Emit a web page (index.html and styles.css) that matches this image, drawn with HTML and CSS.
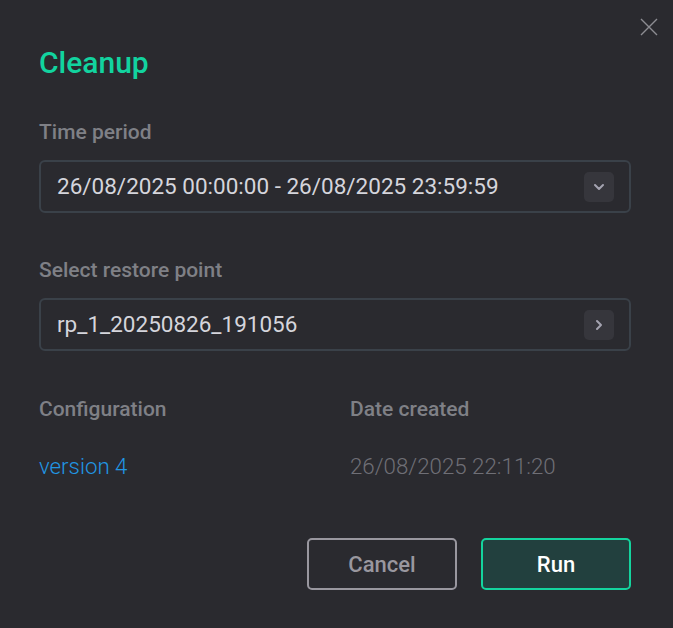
FILE: index.html
```html
<!DOCTYPE html>
<html>
<head>
<meta charset="utf-8">
<link rel="stylesheet" href="styles.css">
</head>
<body>
<div class="dialog">
  <button class="close" aria-label="Close">
    <svg width="18" height="18" viewBox="0 0 18 18"><path d="M1 1L17 17M17 1L1 17" stroke="#8c8c92" stroke-width="1.4" fill="none"/></svg>
  </button>
  <h1 class="title">Cleanup</h1>
  <div class="field">
    <div class="label">Time period</div>
    <div class="input">
      <span class="input-text">26/08/2025 00:00:00 - 26/08/2025 23:59:59</span>
      <span class="icon-btn">
        <svg width="12" height="8" viewBox="0 0 12 8"><path d="M2 2L6 6L10 2" stroke="#a4a3b0" stroke-width="2" fill="none" stroke-linecap="round" stroke-linejoin="round"/></svg>
      </span>
    </div>
  </div>
  <div class="field">
    <div class="label">Select restore point</div>
    <div class="input">
      <span class="input-text">rp_1_20250826_191056</span>
      <span class="icon-btn">
        <svg width="8" height="12" viewBox="0 0 8 12"><path d="M2 2L6 6L2 10" stroke="#a4a3b0" stroke-width="2" fill="none" stroke-linecap="round" stroke-linejoin="round"/></svg>
      </span>
    </div>
  </div>
  <div class="info">
    <div class="col">
      <div class="label">Configuration</div>
      <div class="value link">version 4</div>
    </div>
    <div class="col">
      <div class="label">Date created</div>
      <div class="value muted">26/08/2025 22:11:20</div>
    </div>
  </div>
  <div class="actions">
    <button class="btn cancel">Cancel</button>
    <button class="btn run">Run</button>
  </div>
</div>
</body>
</html>
```
FILE: styles.css
```css
* { box-sizing: border-box; }
html, body { margin: 0; padding: 0; }
body {
  background: #2a2a2f;
  font-family: Roboto, "Liberation Sans", sans-serif;
  width: 673px;
  height: 628px;
  overflow: hidden;
}
.dialog {
  position: relative;
  padding: 48px 42px 38px 39px;
  display: flex;
  flex-direction: column;
}
.close {
  position: absolute;
  top: 18px;
  right: 15px;
  background: none;
  border: 0;
  padding: 0;
  width: 18px;
  height: 18px;
  display: flex;
}
.title {
  margin: 0;
  font-size: 30px;
  line-height: 30px;
  font-weight: 500;
  color: #12d39f;
}
.label {
  font-size: 21px;
  line-height: 20px;
  font-weight: 500;
  color: #7f8086;
}
.field {
  display: flex;
  flex-direction: column;
  gap: 18px;
}
.title + .field { margin-top: 44px; }
.field + .field { margin-top: 47px; }
.input {
  height: 53px;
  border: 2px solid #3a4149;
  border-radius: 6px;
  display: flex;
  align-items: center;
  justify-content: space-between;
  padding: 0 15px 0 16px;
}
.input-text {
  font-size: 22.5px;
  line-height: 23px;
  color: #d5d5dc;
}
.icon-btn {
  width: 30px;
  height: 30px;
  border-radius: 5px;
  background: #36363c;
  display: flex;
  align-items: center;
  justify-content: center;
}
.info {
  margin-top: 48px;
  display: grid;
  grid-template-columns: 311px 1fr;
}
.col {
  display: flex;
  flex-direction: column;
  gap: 36px;
}
.value {
  font-size: 22.3px;
  line-height: 22px;
  font-weight: 300;
}
.link { color: #2196e3; }
.muted { color: #6f6f76; }
.actions {
  margin-top: 61px;
  display: flex;
  justify-content: flex-end;
  gap: 24px;
}
.btn {
  width: 150px;
  height: 52px;
  border-radius: 5px;
  font-family: Roboto, "Liberation Sans", sans-serif;
  font-size: 22px;
  font-weight: 500;
  padding: 0;
}
.cancel {
  background: transparent;
  border: 2px solid #99979f;
  color: #99979f;
}
.run {
  background: #22403e;
  border: 2px solid #14d49e;
  color: #ffffff;
  font-weight: 500;
}
```
